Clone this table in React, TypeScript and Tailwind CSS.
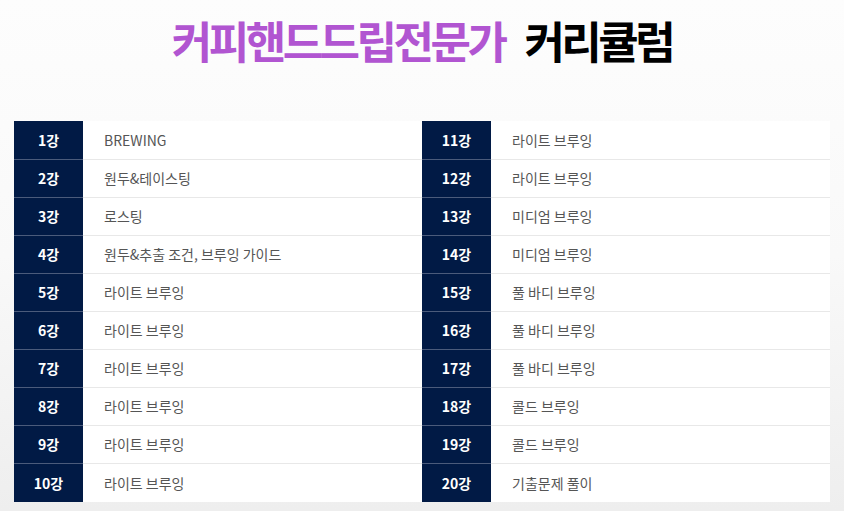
const left = [
  'BREWING',
  '원두&테이스팅',
  '로스팅',
  '원두&추출 조건, 브루잉 가이드',
  '라이트 브루잉',
  '라이트 브루잉',
  '라이트 브루잉',
  '라이트 브루잉',
  '라이트 브루잉',
  '라이트 브루잉',
];

const right = [
  '라이트 브루잉',
  '라이트 브루잉',
  '미디엄 브루잉',
  '미디엄 브루잉',
  '풀 바디 브루잉',
  '풀 바디 브루잉',
  '풀 바디 브루잉',
  '콜드 브루잉',
  '콜드 브루잉',
  '기출문제 풀이',
];

function Column({ items, start }: { items: string[]; start: number }) {
  return (
    <div className="flex flex-col">
      {items.map((text, i) => {
        const last = i === items.length - 1;
        return (
          <div
            key={i}
            className={`flex ${last ? 'h-[39px]' : 'h-[38px]'} ${i > 0 ? 'border-t border-[#e8e8e8]' : ''}`}
          >
            <div
              className={`w-[69px] flex items-center justify-center bg-[#011a45] text-white font-bold text-[14px] ${
                i > 0 ? '-mt-px border-t border-[#4b5b7b]' : ''
              }`}
            >
              {start + i}강
            </div>
            <div className="flex-1 flex items-center pl-[21px] bg-white text-[14px] text-[#555]">{text}</div>
          </div>
        );
      })}
    </div>
  );
}

export default function App() {
  return (
    <div
      className="w-[844px] h-[511px] overflow-hidden bg-gradient-to-b from-[#fdfdfd] via-[#f9f9f9] to-[#eeeeee]"
      style={{ fontFamily: '"Noto Sans CJK KR", "Noto Sans", sans-serif' }}
    >
      <h1 className="pt-[10px] h-[121px] text-center text-[44px] font-bold tracking-[-0.08em] leading-[60px]">
        <span className="text-[#b155d1]">커피핸드드립전문가</span>
        <span className="ml-[20px] text-black">커리큘럼</span>
      </h1>
      <div className="ml-[14px] w-[816px] grid grid-cols-2">
        <Column items={left} start={1} />
        <Column items={right} start={11} />
      </div>
    </div>
  );
}
